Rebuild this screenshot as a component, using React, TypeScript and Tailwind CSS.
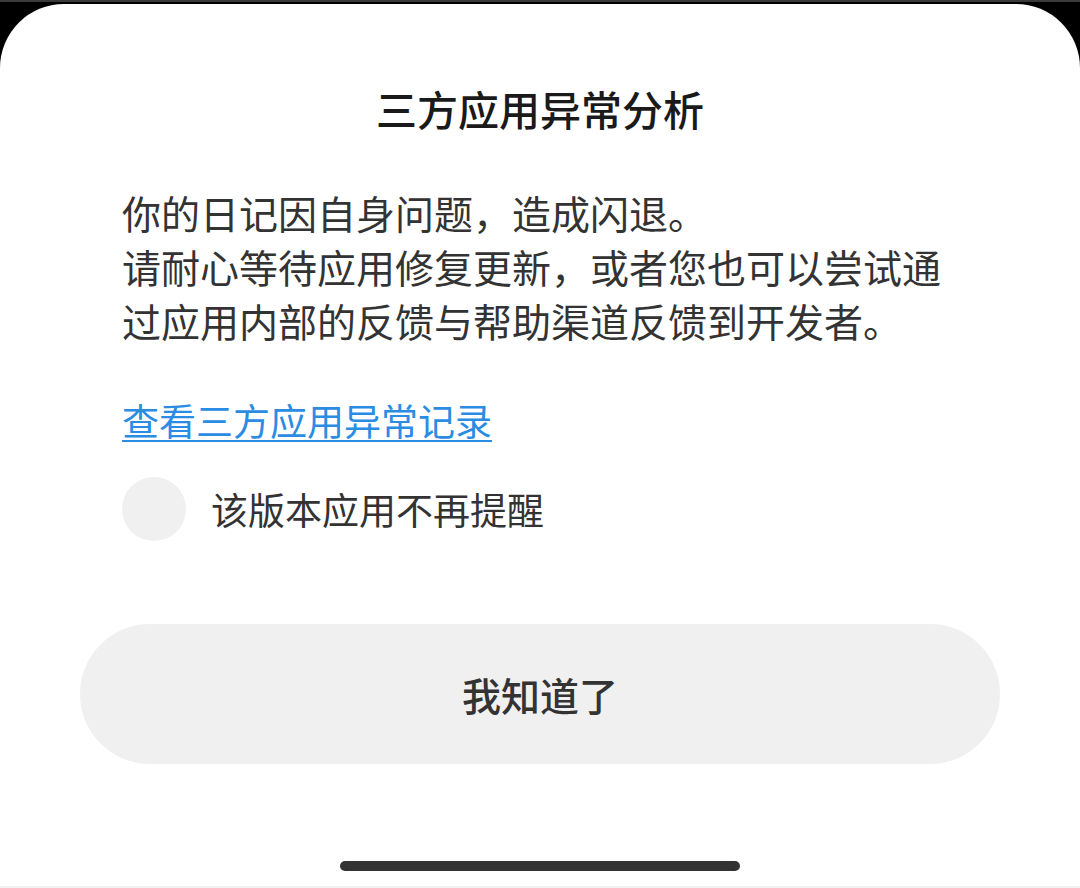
export default function App() {
  return (
    <div
      className="w-[1080px] h-[888px] bg-black overflow-hidden pt-[2px] border-t-2 border-[#3a3a3a]"
      style={{ fontFamily: '"Noto Sans CJK SC", "Noto Sans", sans-serif' }}
    >
      <div className="h-full bg-white rounded-t-[64px] flex flex-col border-b-2 border-[#f2f2f2]">
        <h1 className="pt-[76px] text-center text-[41px] leading-[56px] font-medium text-[#1a1a1a]">
          三方应用异常分析
        </h1>

        <p className="mt-[49px] pl-[122px] text-[39px] leading-[54px] text-[#333333] whitespace-nowrap">
          你的日记因自身问题，造成闪退。
          <br />
          请耐心等待应用修复更新，或者您也可以尝试通
          <br />
          过应用内部的反馈与帮助渠道反馈到开发者。
        </p>

        <a
          href="#"
          className="mt-[48px] ml-[122px] self-start text-[37px] leading-[50px] text-[#2b8ce3] underline underline-offset-[4px] decoration-2"
        >
          查看三方应用异常记录
        </a>

        <label className="mt-[32px] ml-[122px] flex items-center gap-[25px] cursor-pointer">
          <span className="w-[64px] h-[64px] rounded-full bg-[#f0f0f0]" />
          <span className="text-[37px] leading-[50px] text-[#333333]">该版本应用不再提醒</span>
        </label>

        <div className="mt-[83px] px-[80px]">
          <button className="w-full h-[140px] rounded-full bg-[#f0f0f0] text-[39px] font-medium text-[#333333]">
            我知道了
          </button>
        </div>

        <div className="mt-auto mb-[15px] flex justify-center">
          <div className="w-[400px] h-[10px] rounded-full bg-[#333333]" />
        </div>
      </div>
    </div>
  );
}
